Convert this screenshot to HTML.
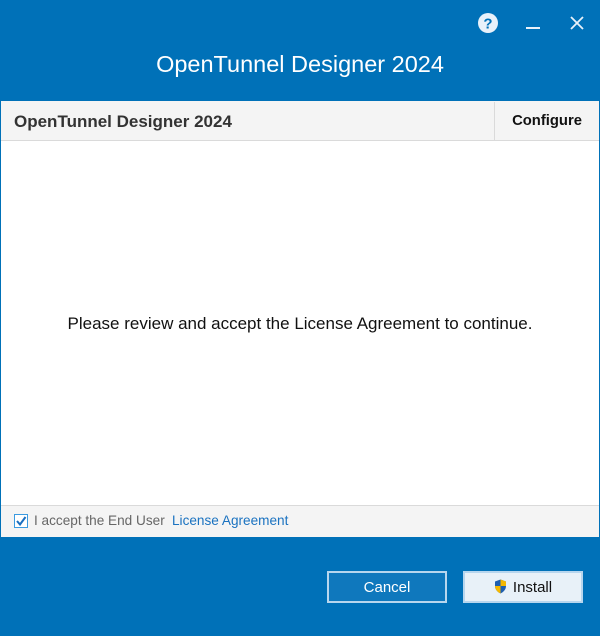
<!DOCTYPE html>
<html><head><style>
*{margin:0;padding:0;box-sizing:border-box}
body{width:600px;height:636px;background:#0071b8;font-family:"Liberation Sans",sans-serif;position:relative;overflow:hidden}
.t{position:absolute;left:0;width:600px;top:51px;text-align:center;color:#fff;font-size:23.5px}
.panel{position:absolute;left:1px;top:101px;width:598px;height:436px;background:#fff}
.hdr{position:absolute;left:0;top:0;width:598px;height:40px;background:#f4f4f4;border-bottom:1px solid #dadada}
.hdr .a{position:absolute;left:13px;top:11px;font-weight:bold;font-size:17px;color:#333}
.hdr .c{position:absolute;left:493px;top:1px;width:105px;height:38px;border-left:1px solid #dadada;font-weight:bold;font-size:14.8px;color:#111;text-align:center;line-height:38px}
.msg{position:absolute;left:0;width:598px;top:213px;text-align:center;font-size:17px;color:#111}
.ftr{position:absolute;left:0;top:404px;width:598px;height:32px;background:#f4f4f4;border-top:1px solid #dadada;font-size:13.6px;color:#666}
.cb{position:absolute;left:13px;top:8px;width:14px;height:14px;border:1px solid #3a9ae0;background:#fff}
.btn{position:absolute;top:571px;width:120px;height:32px;font-size:15px;text-align:center;line-height:29px}
</style></head><body>
<svg style="position:absolute;left:478px;top:13px" width="20" height="20"><circle cx="10" cy="10" r="10" fill="#e8f1fa"/><text x="10" y="15.5" text-anchor="middle" font-family="Liberation Sans" font-weight="bold" font-size="15" fill="#0071b8">?</text></svg>
<div style="position:absolute;left:526px;top:27px;width:14px;height:2px;background:#e8f1fa"></div>
<svg style="position:absolute;left:569px;top:15px" width="16" height="16"><path d="M2 2L14 14M14 2L2 14" stroke="#e8f1fa" stroke-width="1.8"/></svg>
<div class="t">OpenTunnel Designer 2024</div>
<div class="panel">
<div class="hdr"><div class="a">OpenTunnel Designer 2024</div><div class="c">Configure</div></div>
<div class="msg">Please review and accept the License Agreement to continue.</div>
<div class="ftr"><div class="cb"><svg width="12" height="12" style="position:absolute;left:0;top:0"><path d="M2 6L5 9.5L10.5 2" stroke="#1a6fc0" stroke-width="2" fill="none"/></svg></div>
<span style="position:absolute;left:33px;top:7px">I accept the End User</span>
<span style="position:absolute;left:171px;top:7px;color:#1a72c0">License Agreement</span></div>
</div>
<div class="btn" style="left:327px;border:2px solid #b7d6ee;color:#fff;background:#0f78bd">Cancel</div>
<div class="btn" style="left:463px;border:2px solid #b7d6ee;color:#111;background:#e8f1f8"><svg width="13" height="15" style="vertical-align:-2px;margin-right:6px" viewBox="0 0 13 15"><path d="M6.5 0.5L12 2.5V7C12 10.5 9.5 13 6.5 14.5C3.5 13 1 10.5 1 7V2.5Z" fill="#1e5fb0"/><path d="M6.5 0.5L12 2.5V7H6.5Z" fill="#f5b800"/><path d="M1 7H6.5V14.5C3.5 13 1 10.5 1 7Z" fill="#f5b800"/></svg>Install</div>
</body></html>
